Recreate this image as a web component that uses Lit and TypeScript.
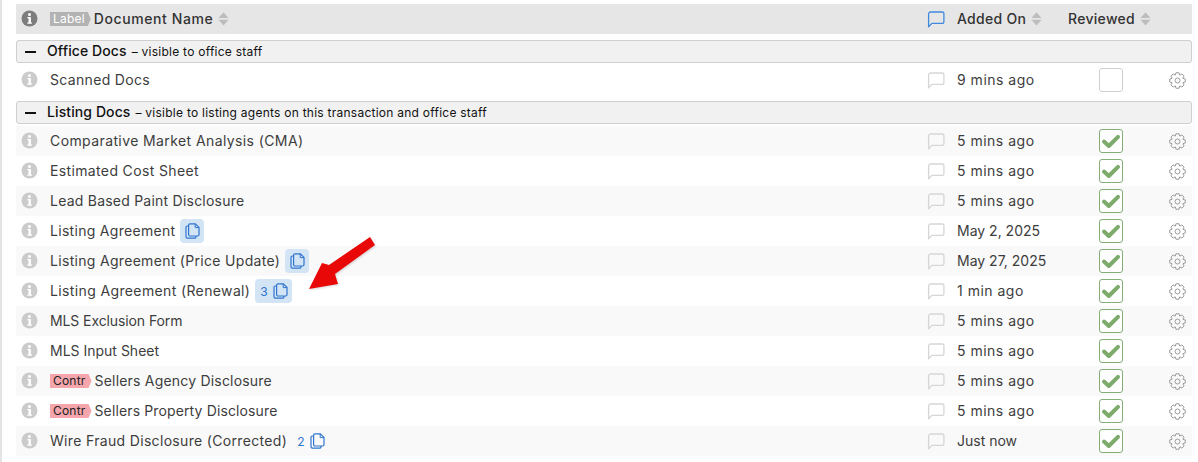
import { LitElement, html, css, svg } from 'lit';
import { customElement } from 'lit/decorators.js';

interface Doc {
  name: string;
  added: string;
  tag?: string;
  copies?: number;
  pill?: boolean;
  // the font is a stand-in, so each name gets its own tracking to keep its width
  track?: number;
}

const officeDocs: Doc[] = [{ name: 'Scanned Docs', added: '9 mins ago' }];

const listingDocs: Doc[] = [
  { name: 'Comparative Market Analysis (CMA)', added: '5 mins ago', track: 0.4 },
  { name: 'Estimated Cost Sheet', added: '5 mins ago', track: 0.36 },
  { name: 'Lead Based Paint Disclosure', added: '5 mins ago', track: 0.23 },
  { name: 'Listing Agreement', added: 'May 2, 2025', pill: true, track: 0.3 },
  { name: 'Listing Agreement (Price Update)', added: 'May 27, 2025', pill: true, track: 0.31 },
  { name: 'Listing Agreement (Renewal)', added: '1 min ago', pill: true, copies: 3, track: 0.37 },
  { name: 'MLS Exclusion Form', added: '5 mins ago', track: -0.1 },
  { name: 'MLS Input Sheet', added: '5 mins ago', track: 0 },
  { name: 'Sellers Agency Disclosure', added: '5 mins ago', tag: 'Contr', track: 0.2 },
  { name: 'Sellers Property Disclosure', added: '5 mins ago', tag: 'Contr', track: 0.13 },
  { name: 'Wire Fraud Disclosure (Corrected)', added: 'Just now', copies: 2, track: 0.33 },
];

const infoIcon = (color: string) => html`<svg class="info" width="17" height="17" viewBox="0 0 17 17">
  <circle cx="8.5" cy="8.5" r="8" fill=${color}></circle>
  <circle cx="8.5" cy="4.4" r="1.5" fill="#fff"></circle>
  <path d="M6.4 7h3.5v5.4h1v1.3H6.3v-1.3h1.2V8.3H6.4z" fill="#fff"></path>
</svg>`;

const commentIcon = (color: string) => html`<svg class="comment" width="18" height="17" viewBox="0 0 18 17" fill="none">
  <path d="M1.600 15.700V3a2 2 0 0 1 2-2h11.700a1.600 1.600 0 0 1 1.600 1.600v8.200a1.600 1.600 0 0 1-1.600 1.600H4.900z" stroke=${color} stroke-width="1.300" stroke-linejoin="round"></path>
</svg>`;

const sortIcon = html`<svg class="sort" width="11" height="14" viewBox="0 0 11 14">
  <path d="M5.500 0.200 10.500 6H.5z" fill="#bdbdbd"></path>
  <path d="M.5 7.800h10l-5 5.800z" fill="#bdbdbd"></path>
</svg>`;

const copyIcon = html`<svg width="15" height="16" viewBox="0 0 15 16" fill="none" stroke="#2f74cf" stroke-width="1.2" stroke-linejoin="round">
  <path d="M5 .8h5.400l3.600 3.600v7.200a1.400 1.400 0 0 1-1.400 1.400H5a1.400 1.400 0 0 1-1.400-1.400V2.200A1.400 1.400 0 0 1 5 .8z"></path>
  <path d="M10.200 .8v3.800h3.800" stroke-width="1"></path>
  <path d="M3.600 3H2.400A1.400 1.400 0 0 0 1 4.400v9.400a1.400 1.400 0 0 0 1.400 1.400h7.200a1.400 1.400 0 0 0 1.400-1.400V13"></path>
</svg>`;

// eight tooth cog outline, worked out once from polar points
const cogPath = (() => {
  const pts: string[] = [];
  for (let i = 0; i < 8; i++) {
    const mid = (i * Math.PI) / 4;
    const at = (r: number, a: number) =>
      `${(8.5 + r * Math.cos(mid + a)).toFixed(2)} ${(8.5 + r * Math.sin(mid + a)).toFixed(2)}`;
    pts.push(at(5.9, -0.36), at(7.9, -0.2), at(7.9, 0.2), at(5.9, 0.36));
  }
  return `M${pts.join('L')}Z`;
})();

const gearIcon = html`<svg class="gear-svg" width="17" height="17" viewBox="0 0 17 17" fill="none" stroke="#9b9b9b" stroke-width="1" stroke-linejoin="round">
  ${svg`<path d=${cogPath}></path>`}
  <circle cx="8.500" cy="8.500" r="2.500"></circle>
</svg>`;

@customElement('app-root')
export class AppRoot extends LitElement {
  static override styles = css`
    :host {
      display: block;
      position: relative;
      height: 462px;
      padding: 4px 6px 0 14px;
      box-sizing: border-box;
      background: #fff;
      border-left: 2px solid #e4e4e4;
      overflow: hidden;
      font-family: 'Inter', 'Liberation Sans', sans-serif;
      font-size: 14px;
      color: #3d3d3d;
    }

    .row {
      display: grid;
      grid-template-columns: 34px 877px 30px 111px 85px 39px;
      align-items: center;
      height: 30px;
    }

    .row.striped {
      background: #f9f9f9;
    }

    .row.head {
      background: #e6e6e6;
      color: #333;
      font-weight: 500;
      letter-spacing: 0.3px;
    }

    .info {
      display: block;
      margin: 0 0 1px 5px;
    }

    .name {
      display: flex;
      align-items: center;
      gap: 3px;
      white-space: nowrap;
    }

    .text {
      margin-bottom: 2px;
    }

    .head .doc-title {
      letter-spacing: 0.6px;
      margin-bottom: 2px;
    }

    .sort {
      margin-left: 5px;
    }

    .name .sort {
      margin-left: 2px;
    }

    .cell {
      display: flex;
      align-items: center;
    }

    .comment {
      display: block;
    }

    .added {
      margin-bottom: 2px;
    }

    .added.ago {
      letter-spacing: 0.5px;
    }

    .group {
      display: flex;
      align-items: baseline;
      gap: 5px;
      height: 23px;
      line-height: 20px;
      box-sizing: border-box;
      margin: 6px 0 2px;
      padding-left: 8px;
      background: #f1f1f1;
      border: 1px solid #cfcfcf;
      border-radius: 3px;
      color: #111;
    }

    .group .dash {
      width: 11px;
      height: 2px;
      background: #111;
      align-self: center;
      margin-right: 6px;
    }

    .group b {
      font-weight: 500;
      letter-spacing: 0.1px;
    }

    .group span {
      font-size: 12px;
      letter-spacing: 0.25px;
    }

    .tag {
      display: inline-block;
      height: 14px;
      line-height: 14px;
      padding: 0 6px 0 3px;
      font-size: 12px;
      letter-spacing: 0.2px;
      clip-path: polygon(0 0, calc(100% - 3px) 0, 100% 50%, calc(100% - 3px) 100%, 0 100%);
    }

    .tag.label {
      background: #b3b3b3;
      color: #fff;
      font-weight: 400;
    }

    .tag.contr {
      background: #f4a6ac;
      color: #222;
    }

    .copies {
      display: flex;
      align-items: center;
      gap: 5px;
      margin-left: 7px;
      color: #2f74cf;
      font-size: 12px;
    }

    .copies.pill {
      height: 24px;
      padding: 0 4px 0 5px;
      background: #d3e4f5;
      border-radius: 4px;
      margin-left: 2px;
    }

    .check {
      width: 24px;
      height: 24px;
      box-sizing: border-box;
      margin-left: 31px;
      border: 1px solid #cfcfcf;
      border-radius: 3px;
      background: #fff;
    }

    .check.on {
      border-color: #85ad78;
    }

    .check svg,
    .gear-svg {
      display: block;
    }

    .gear {
      margin-left: 16px;
    }

    .arrow {
      position: absolute;
      left: 298px;
      top: 232px;
      filter: drop-shadow(1px 1px 1px rgba(0, 0, 0, 0.15));
    }
  `;

  private renderRow(doc: Doc, striped: boolean, reviewed: boolean) {
    return html`<div class="row ${striped ? 'striped' : ''}">
      ${infoIcon('#cbcbcb')}
      <div class="name">
        ${doc.tag ? html`<span class="tag contr">${doc.tag}</span>` : ''}
        <span class="text" style="letter-spacing: ${doc.track ?? 0.33}px">${doc.name}</span>
        ${doc.pill || doc.copies
          ? html`<span class="copies ${doc.pill ? 'pill' : ''}">${doc.copies ?? ''}${copyIcon}</span>`
          : ''}
      </div>
      <div class="cell">${commentIcon('#d6d6d6')}</div>
      <div class="added ${doc.added.endsWith('ago') ? 'ago' : ''}">${doc.added}</div>
      <div class="check ${reviewed ? 'on' : ''}">
        ${reviewed
          ? html`<svg width="22" height="22" viewBox="0 0 22 22">
              <path d="M4 11.500 8.800 16 18 6.800" fill="none" stroke="#7cab6b" stroke-width="4" stroke-linecap="round" stroke-linejoin="round"></path>
            </svg>`
          : ''}
      </div>
      <div class="gear">${gearIcon}</div>
    </div>`;
  }

  override render() {
    return html`
      <div class="row head">
        ${infoIcon('#7d7d7d')}
        <div class="name">
          <span class="tag label">Label</span>
          <span class="doc-title">Document Name</span>${sortIcon}
        </div>
        <div class="cell">${commentIcon('#3f8ae0')}</div>
        <div class="cell"><span class="text">Added On</span>${sortIcon}</div>
        <div class="cell"><span class="text">Reviewed</span>${sortIcon}</div>
        <div></div>
      </div>
      <div class="group"><i class="dash"></i><b>Office Docs</b><span>– visible to office staff</span></div>
      ${officeDocs.map((d) => this.renderRow(d, false, false))}
      <div class="group">
        <i class="dash"></i><b>Listing Docs</b>
        <span>– visible to listing agents on this transaction and office staff</span>
      </div>
      ${listingDocs.map((d, i) => this.renderRow(d, i % 2 === 0, true))}
      <svg class="arrow" width="80" height="66" viewBox="0 0 80 66">
        <path d="M70 5 75 13 35 42 38 52 9 57 22 31 29 33z" fill="#e80808"></path>
      </svg>
    `;
  }
}
